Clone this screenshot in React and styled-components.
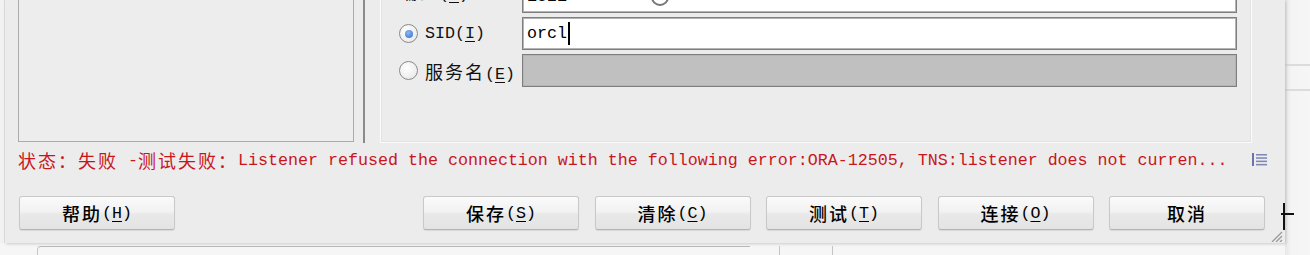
import React from "react";
import styled, { createGlobalStyle } from "styled-components";

const Global = createGlobalStyle`
  html, body { margin: 0; padding: 0; background: #f6f6f6; }
  body { font-family: "Noto Sans CJK SC", sans-serif; }
`;

const Page = styled.div`
  position: relative;
  width: 1310px;
  height: 255px;
  overflow: hidden;
  display: grid;
  grid-template-columns: 5px 1280px 1fr;
  grid-template-rows: 243px 12px;
  background: #f6f6f6;
`;

const LeftStrip = styled.div`
  grid-column: 1;
  grid-row: 1;
  background: #f2f2f2;
  border-right: 1px solid #e0e0e0;
`;

const Dialog = styled.div`
  position: relative;
  grid-column: 2;
  grid-row: 1;
  display: flex;
  flex-direction: column;
  background: #ececec;
  box-shadow: 1px 1px 3px rgba(0, 0, 0, 0.18);
`;

const Top = styled.div`
  display: flex;
  height: 143px;
  padding-left: 13px;
`;

const LeftPanel = styled.div`
  box-sizing: border-box;
  width: 336px;
  height: 142px;
  border: 1px solid #ababab;
  border-top: none;
  background: #ededed;
`;

const Separator = styled.div`
  width: 2px;
  height: 143px;
  margin-left: 9px;
  background: #8a8a8a;
`;

const RightPanel = styled.div`
  position: relative;
  box-sizing: border-box;
  width: 872px;
  height: 143px;
  margin-left: 15px;
  border: 1px solid #fbfbfb;
  border-top: none;
  box-shadow: inset 1px 0 0 #e2e2e2, inset 0 -1px 0 #e2e2e2, inset -1px 0 0 #e2e2e2;
`;

const Form = styled.div`
  display: grid;
  grid-template-columns: 26px 97px 715px;
  grid-auto-rows: 33px;
  row-gap: 4px;
  align-items: center;
  margin-top: -20px;
  padding-left: 18px;
`;

const Cjk = styled.span`
  font-family: "Noto Sans CJK SC", sans-serif;
  font-size: 18px;
  font-weight: ${(p) => p.$w || 400};
  letter-spacing: 2px;
`;

const Asc = styled.span`
  font-family: "Liberation Mono", monospace;
  font-size: 16.67px;
  white-space: pre;
  text-decoration: ${(p) => (p.$u ? "underline" : "none")};
  text-underline-offset: 3px;
`;

const Label = styled.div`
  grid-column: ${(p) => (p.$wide ? "1 / span 2" : "2")};
  align-self: ${(p) => (p.$wide ? "start" : "center")};
  margin-top: ${(p) => (p.$wide ? "-2px" : "0")};
  display: flex;
  align-items: baseline;
  color: #111;
  white-space: nowrap;
`;

const Radio = styled.div`
  box-sizing: border-box;
  width: 19px;
  height: 19px;
  border-radius: 50%;
  border: 1px solid #8a8a8a;
  background: radial-gradient(circle at 40% 35%, #ffffff, #e4e4e4);
  display: flex;
  align-items: center;
  justify-content: center;
  &::after {
    content: "";
    display: ${(p) => (p.$checked ? "block" : "none")};
    width: 8px;
    height: 8px;
    border-radius: 50%;
    background: radial-gradient(circle at 40% 35%, #8fb8f2, #2f6cd0);
  }
`;

const Input = styled.div`
  position: relative;
  grid-column: 3;
  box-sizing: border-box;
  height: 33px;
  display: flex;
  align-items: center;
  padding-left: 4px;
  border: 1px solid #7e7e7e;
  box-shadow: inset 0 0 0 1px #b4b4b4;
  background: ${(p) => (p.$disabled ? "#c0c0c0" : "#ffffff")};
  color: #000;
`;

const Caret = styled.span`
  display: inline-block;
  width: 2px;
  height: 23px;
  margin-left: 1px;
  background: #000;
`;

const Ring = styled.div`
  position: absolute;
  left: 128px;
  top: 7px;
  width: 14px;
  height: 14px;
  border: 2px solid #777;
  border-radius: 50%;
`;

const StatusRow = styled.div`
  display: flex;
  align-items: center;
  height: 34px;
  padding: 0 18px 0 13px;
  color: #c8161d;
  white-space: nowrap;
`;

const ListIcon = styled.svg`
  margin-left: auto;
  margin-top: -2px;
`;

const ButtonRow = styled.div`
  display: flex;
  justify-content: space-between;
  margin-top: 19px;
  padding: 0 20px 0 14px;
`;

const ButtonGroup = styled.div`
  display: flex;
  gap: 15.5px;
`;

const Button = styled.div`
  box-sizing: border-box;
  width: 156px;
  height: 34px;
  display: flex;
  align-items: center;
  justify-content: center;
  border: 1px solid #c9c9c9;
  border-bottom-color: #b3b3b3;
  border-radius: 3px;
  background: linear-gradient(#fafafa 0%, #f2f2f2 45%, #e8e8e8 55%, #e4e4e4 100%);
  box-shadow: 0 1px 1px rgba(0, 0, 0, 0.08);
  color: #000;
  white-space: nowrap;
`;

const Grip = styled.svg`
  position: absolute;
  right: 2px;
  bottom: 1px;
`;

const RightStrip = styled.div`
  grid-column: 3;
  grid-row: 1 / span 2;
  display: flex;
  flex-direction: column;
  padding-top: 64px;
  background: linear-gradient(to right, #e6e6e6 0, #f4f4f4 6px, #f6f6f6 100%);
`;

const Rule = styled.div`
  height: 2px;
  margin-top: ${(p) => p.$gap || 0}px;
  background: #dcdcdc;
`;

const BottomStrip = styled.div`
  grid-column: 1 / span 2;
  grid-row: 2;
  display: flex;
  padding: 3px 0 0 37px;
`;

const Tray = styled.div`
  width: 712px;
  border-top: 1px solid #b9b9b9;
  border-left: 1px solid #c6c6c6;
  border-radius: 4px 0 0 0;
`;

const Tick = styled.div`
  width: 1px;
  margin-left: ${(p) => p.$gap}px;
  background: #c4c4c4;
`;

const Cursor = styled.svg`
  position: absolute;
  left: 1278px;
  top: 202px;
`;

function Mnemonic({ cjk, k, w }) {
  return (
    <>
      {cjk && <Cjk $w={w}>{cjk}</Cjk>}
      {k && (
        <>
          <Asc>(</Asc>
          <Asc $u>{k}</Asc>
          <Asc>)</Asc>
        </>
      )}
    </>
  );
}

const buttons = [
  ["保存", "S"],
  ["清除", "C"],
  ["测试", "T"],
  ["连接", "O"],
  ["取消", null],
];

export default function App() {
  return (
    <Page>
      <Global />
      <LeftStrip />
      <Dialog>
        <Top>
          <LeftPanel />
          <Separator />
          <RightPanel>
            <Form>
              <Label $wide>
                <Mnemonic cjk="端口" k="P" />
              </Label>
              <Input>
                <Asc>1521</Asc>
                <Ring />
              </Input>

              <Radio $checked />
              <Label>
                <Asc>SID</Asc>
                <Mnemonic k="I" />
              </Label>
              <Input>
                <Asc>orcl</Asc>
                <Caret />
              </Input>

              <Radio />
              <Label>
                <Mnemonic cjk="服务名" k="E" />
              </Label>
              <Input $disabled />
            </Form>
          </RightPanel>
        </Top>

        <StatusRow>
          <Cjk>状态：失败</Cjk>
          <Asc>{" -"}</Asc>
          <Cjk>测试失败：</Cjk>
          <Asc>
            Listener refused the connection with the following error:ORA-12505, TNS:listener does not curren...
          </Asc>
          <ListIcon width="15" height="13" viewBox="0 0 15 13">
            <rect x="0" y="0" width="2" height="13" fill="#6a74a8" />
            <rect x="4" y="1" width="11" height="1.5" fill="#7d86b6" />
            <rect x="4" y="4.3" width="11" height="1.5" fill="#7d86b6" />
            <rect x="4" y="7.6" width="11" height="1.5" fill="#7d86b6" />
            <rect x="4" y="10.9" width="11" height="1.5" fill="#7d86b6" />
          </ListIcon>
        </StatusRow>

        <ButtonRow>
          <Button>
            <Mnemonic cjk="帮助" k="H" w={500} />
          </Button>
          <ButtonGroup>
            {buttons.map(([cjk, k]) => (
              <Button key={cjk}>
                <Mnemonic cjk={cjk} k={k} w={500} />
              </Button>
            ))}
          </ButtonGroup>
        </ButtonRow>

        <Grip width="14" height="13" viewBox="0 0 14 13">
          <path d="M13 3 L3 13 M13 7 L7 13 M13 11 L11 13" stroke="#9a9a9a" strokeWidth="1.3" />
        </Grip>
      </Dialog>

      <RightStrip>
        <Rule />
        <Rule $gap={23} />
      </RightStrip>

      <BottomStrip>
        <Tray />
        <Tick $gap={29} />
        <Tick $gap={52} />
      </BottomStrip>

      <Cursor width="18" height="30" viewBox="0 0 18 30">
        <path d="M6 1 V28 M3 12 H16" stroke="#111" strokeWidth="2" fill="none" />
      </Cursor>
    </Page>
  );
}
